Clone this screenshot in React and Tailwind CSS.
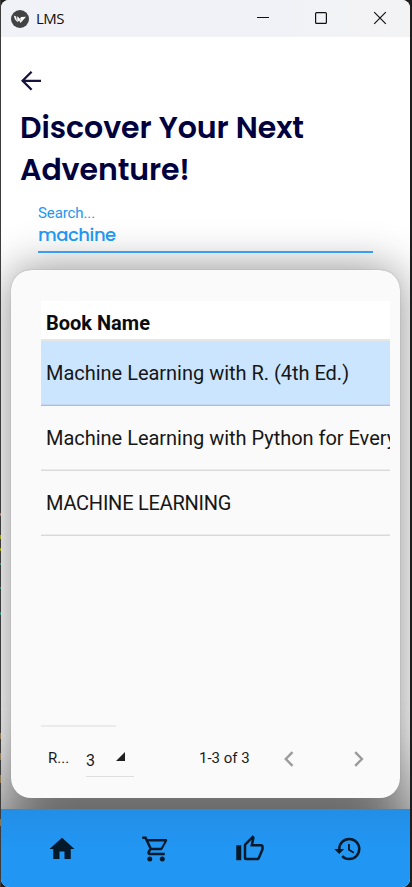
import React from "react";

const NAV_ICONS = [
  {
    name: "home",
    box: "ml-[45.5px]",
    d: "M10,20V14H14V20H19V12H22L12,3L2,12H5V20H10Z",
  },
  {
    name: "cart",
    box: "ml-[64px]",
    d: "M17,18A2,2 0 0,1 19,20A2,2 0 0,1 17,22C15.89,22 15,21.1 15,20C15,18.89 15.89,18 17,18M1,2H4.27L5.21,4H20A1,1 0 0,1 21,5C21,5.17 20.95,5.34 20.88,5.5L17.3,11.97C16.96,12.58 16.3,13 15.55,13H8.1L7.2,14.63L7.17,14.75A0.25,0.25 0 0,0 7.42,15H19V17H7C5.89,17 5,16.1 5,15C5,14.65 5.09,14.32 5.24,14.04L6.6,11.59L3,4H1V2M7,18A2,2 0 0,1 9,20A2,2 0 0,1 7,22C5.89,22 5,21.1 5,20C5,18.89 5.89,18 7,18M16,11L18.78,6H6.14L8.5,11H16Z",
  },
  {
    name: "like",
    box: "ml-[64px]",
    d: "M5,9V21H1V9H5M9,21A2,2 0 0,1 7,19V9C7,8.45 7.22,7.95 7.59,7.59L14.17,1L15.23,2.06C15.5,2.33 15.67,2.7 15.67,3.11L15.64,3.43L14.69,8H21C22.11,8 23,8.9 23,10V12C23,12.26 22.95,12.5 22.86,12.73L19.84,19.78C19.54,20.5 18.83,21 18,21H9M9,19H18.03L21,12V10H12.21L13.34,4.68L9,9.03V19Z",
  },
  {
    name: "history",
    box: "ml-[68.5px]",
    d: "M13.5,8H12V13L16.28,15.54L17,14.33L13.5,12.25V8M13,3A9,9 0 0,0 4,12H1L4.96,16.03L9,12H6A7,7 0 0,1 13,5A7,7 0 0,1 20,12A7,7 0 0,1 13,19C11.07,19 9.32,18.21 8.06,16.94L6.64,18.36C8.27,20 10.5,21 13,21A9,9 0 0,0 22,12A9,9 0 0,0 13,3",
  },
];

function TitleBar() {
  return (
    <header className="flex h-[37px] shrink-0 items-center bg-[linear-gradient(90deg,#f0f2f8_60%,#f3f3f4)] pl-[10px]">
      <svg className="size-[18px]" viewBox="0 0 18 18">
        <circle cx="9" cy="9" r="9" fill="#434343" />
        <path d="M2.7 5.4L5 6.5 6 9.7 6.3 6.2 9 8.8 10 7.1 15 6.8 12.6 9.4 9.5 13 8.2 10.5 6.5 12 4 9.5z" fill="#fff" />
        <path d="M5.5 6.5l.8 4.5M9 8.5l1 2" stroke="#777" strokeWidth=".6" />
      </svg>
      <span className="-mt-[2px] ml-[7px] w-[30px] font-['Open_Sans',sans-serif] text-[15px] font-normal leading-[20px] tracking-[-0.5px] text-[#111]">LMS</span>
      <svg className="ml-[190px] h-5 w-[132px]" viewBox="0 0 132 20" fill="none" stroke="#111">
        <path d="M1 8.5h12" />
        <rect x="59.6" y="3.6" width="10.8" height="10.8" rx="1" strokeWidth="1.2" />
        <path d="M118.2 3.2l11.6 11.6m0-11.6l-11.6 11.6" strokeWidth="1.2" />
      </svg>
    </header>
  );
}

function Row({ children, selected, tight }) {
  return (
    <div
      className={
        "flex h-[65px] items-center overflow-hidden border-b pl-[5px] shadow-[inset_0_-1px_0_rgba(0,0,0,0.06)] " +
        (selected ? "border-[#a9c0d8] bg-[#cbe5ff]" : "border-[#d9d9d9]")
      }
    >
      <span
        className={
          "whitespace-nowrap text-[20px] leading-6 text-[#161616] " +
          (tight ? "tracking-[-0.24px]" : "tracking-[-0.02px]")
        }
      >
        {children}
      </span>
    </div>
  );
}

function Pagination() {
  return (
    <div className="flex h-[56px] items-start pt-[18px] text-[#1a1a1a]">
      <span className="ml-[7px] w-[38px] text-[15px] leading-5">R...</span>
      <div className="mt-[2px] flex h-[27px] w-[48px] items-start border-b border-[#dedede]">
        <span className="w-[30px] pt-[2px] text-[16px] leading-[18px]">3</span>
        <svg className="mt-[2px] size-[9px]" viewBox="0 0 9 9">
          <path d="M9 0V9H0z" fill="#202020" />
        </svg>
      </div>
      <span className="ml-[65px] w-[85px] whitespace-nowrap text-[15px] leading-5">1-3 of 3</span>
      <svg className="mt-[2.5px] h-4 w-20" viewBox="0 0 80 16" fill="none" stroke="#9b9b9b" strokeWidth="2.4">
        <path d="M8.5 1.2L1.8 8l6.7 6.8M71.2 1.2L77.9 8 71.2 14.8" />
      </svg>
    </div>
  );
}

export default function App() {
  return (
    <div className="flex h-[887px] w-[412px] overflow-hidden bg-[#1e1e1e] font-[Roboto,sans-serif]">
      <div className="w-px shrink-0 bg-[linear-gradient(180deg,#3c3c3c_513px,#a87862_513px,#a87862_516px,#3c3c3c_516px,#3c3c3c_535px,#9b9b20_535px,#9b9b20_539px,#3c3c3c_539px,#3c3c3c_548px,#9b9b20_548px,#9b9b20_551px,#3c3c3c_551px,#3c3c3c_563px,#3f8378_563px,#3f8378_565px,#3c3c3c_565px,#3c3c3c_587px,#3f8378_587px,#3f8378_589px,#3c3c3c_589px,#3c3c3c_612px,#3f8378_612px,#3f8378_615px,#3c3c3c_615px,#3c3c3c_733px,#8a7450_733px,#8a7450_739px,#3c3c3c_739px,#3c3c3c_753px,#8a7450_753px,#8a7450_760px,#3c3c3c_760px,#3c3c3c_775px,#8a7450_775px,#8a7450_783px,#3c3c3c_783px,#3c3c3c_819px,#8a7450_819px,#8a7450_826px,#3c3c3c_826px)]" />
      <main className="flex w-[409px] flex-col overflow-hidden rounded-[8px] bg-white">
        <TitleBar />
        <section className="relative z-20 flex h-[233px] shrink-0 flex-col pl-[20px]">
          <svg className="mt-[34px] h-5 w-5" viewBox="0 0 20 20" fill="none" stroke="#17133c" strokeWidth="2.3">
            <path d="M20 9.8H2M10.6 .8L1.6 9.8l9 9" />
          </svg>
          <h1 className="-ml-px mt-[16px] font-[Poppins,Inter,sans-serif] text-[30px] font-semibold leading-[42px] text-[#00003f]">
            <span className="block whitespace-nowrap tracking-[-0.05px]">Discover Your Next</span>
            <span className="block whitespace-nowrap tracking-[-0.1px]">Adventure!</span>
          </h1>
          <div className="ml-[17px] mt-[13px] flex h-[49px] w-[335px] flex-col border-b-2 border-[#3a9df0] text-[#2196f3]">
            <span className="text-[15px] leading-[18px] tracking-[-0.1px]">Search...</span>
            <span className="mt-[1px] font-[Poppins,Inter,sans-serif] text-[18px] font-medium leading-6 tracking-[-0.45px]">machine</span>
          </div>
        </section>
        <section className="relative z-10 ml-[10px] flex h-[528px] w-[389px] shrink-0 flex-col rounded-[20px] bg-[#fafafa] pl-[30px] pt-[31px] shadow-[0_0_45px_rgba(0,0,0,0.46),0_0_1px_#999]">
          <div className="h-[424px] w-[349px] shrink-0 overflow-hidden">
            <div className="flex h-[40px] items-center border-b-2 border-[#e6e6e6] bg-white pl-[5px] pt-[6px] text-[20px] font-bold leading-6 text-[#0c0c0c]">
              Book Name
            </div>
            <Row selected>Machine Learning with R. (4th Ed.)</Row>
            <Row>Machine Learning with Python for Everyone</Row>
            <Row tight>MACHINE LEARNING</Row>
          </div>
          <div className="h-[2px] w-[75px] shrink-0 bg-[#ebebeb]" />
          <div className="mt-[3px] w-[349px]">
            <Pagination />
          </div>
        </section>
        <div className="h-[11px] shrink-0" />
        <div className="shrink-0 shadow-[0_0_80px_14px_rgba(0,0,0,0.8)]">
          <nav className="relative z-20 flex h-[78px] items-start bg-[linear-gradient(180deg,#238ee5,#2293ef_24px,#2196f3_40px)] pt-[25px]">
            {NAV_ICONS.map((icon) => (
              <svg key={icon.name} className={"size-[30px] shrink-0 " + icon.box} viewBox="0 0 24 24" fill="#04192a">
                <path d={icon.d} />
              </svg>
            ))}
          </nav>
        </div>
      </main>
      <div className="w-[2px] shrink-0 bg-[#1e1e1e]" />
    </div>
  );
}
